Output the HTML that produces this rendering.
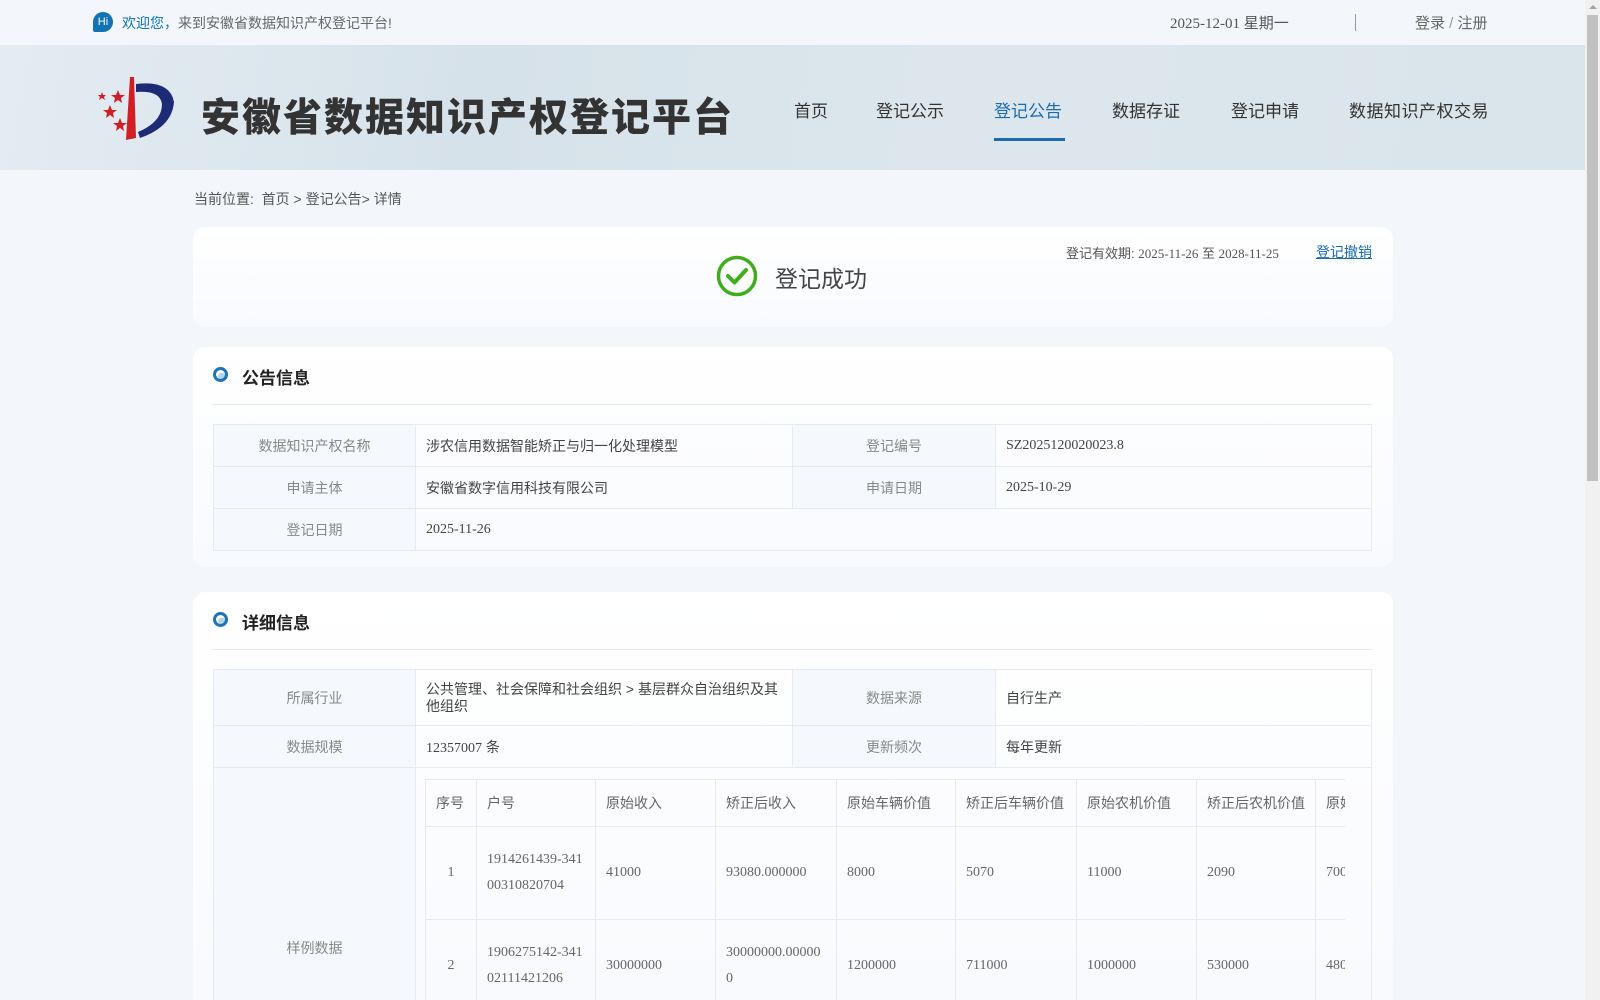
<!DOCTYPE html>
<html style="height:1000px;overflow:hidden"><head><meta charset="utf-8"><style>
*{margin:0;padding:0;box-sizing:border-box}
body{width:1600px;height:1000px;overflow:hidden;background:#f3f6fb;font-family:"Liberation Sans","Noto Sans CJK SC",sans-serif;font-size:14px;color:#333;position:relative}
.a{position:absolute;white-space:nowrap}
.serif{font-family:"Liberation Serif","Noto Sans CJK SC",serif}
.top{left:0;top:0;width:1585px;height:45px;background:#f3f6fb}
.hdr{left:0;top:45px;width:1585px;height:125px;background:linear-gradient(100deg,#e4ecf2 0%,#d6e2ea 30%,#dce6ec 60%,#dae5eb 100%)}
.nav{top:97px;font-size:17px;color:#333}
.card{background:linear-gradient(#fff,#f8fafd);border-radius:12px}
table{border-collapse:collapse;position:absolute}
td{border:1px solid #e6ebf1;font-size:14px}
td.k{background:#f5f9fd;color:#888;text-align:center}
td.v{padding-left:10px;color:#444}
.it td{color:#666;padding-left:10px;line-height:26px}
.ttl{font-size:17px;font-weight:bold;color:#222}
.dot{width:15px;height:15px;border-radius:50%;border:3px solid #1b75b8;background:radial-gradient(circle at 65% 70%,#b9d3ea 40%,#fff 45%)}
.hr{height:1px;background:#e6e9ee}
</style></head><body>
<div class="a top"></div>
<div class="a" style="left:93px;top:12px;width:20px;height:20px;border-radius:50% 50% 50% 2px;background:#1273b5;color:#fff;font-size:11px;line-height:20px;text-align:center">Hi</div>
<div class="a" style="left:122px;top:13px;font-size:14px;color:#666"><span style="color:#1273b5">欢迎您，</span>来到安徽省数据知识产权登记平台!</div>
<div class="a serif" style="left:1170px;top:12px;font-size:15px;color:#555">2025-12-01 星期一</div>
<div class="a" style="left:1355px;top:14px;width:1px;height:17px;background:#999"></div>
<div class="a" style="left:1415px;top:12px;font-size:15px;color:#666">登录 <span style="color:#999">/</span> 注册</div>
<div class="a hdr"></div>
<svg class="a" style="left:90px;top:72px" width="90" height="70" viewBox="0 0 90 70">
<path d="M40 5 L36 68 L46 66 L44 5 Z" fill="#d21f26"/>
<path d="M46 12 Q80 8 84 30 Q82 55 50 66 L48 60 Q72 50 72 32 Q70 18 46 20 Z" fill="#1d2a75"/>
<polygon points="28,18 30,23 35,23 31,26 32,31 28,28 24,31 25,26 21,23 26,23" fill="#d21f26"/>
<polygon points="20,33 22,38 27,38 23,41 24,46 20,43 16,46 17,41 13,38 18,38" fill="#d21f26"/>
<polygon points="12,20 13,23 16,23 14,25 15,28 12,26 9,28 10,25 8,23 11,23" fill="#d21f26"/>
<polygon points="30,46 32,51 37,51 33,54 34,59 30,56 26,59 27,54 23,51 28,51" fill="#d21f26"/>
</svg>
<div class="a" style="left:201px;top:87px;font-size:39px;font-weight:900;color:#333;letter-spacing:2px">安徽省数据知识产权登记平台</div>
<div class="a nav" style="left:794px">首页</div>
<div class="a nav" style="left:876px">登记公示</div>
<div class="a nav" style="left:994px;color:#1a6bb0">登记公告</div>
<div class="a" style="left:994px;top:138px;width:71px;height:3px;background:#1a6bb0"></div>
<div class="a nav" style="left:1112px">数据存证</div>
<div class="a nav" style="left:1231px">登记申请</div>
<div class="a nav" style="left:1349px;letter-spacing:0.5px">数据知识产权交易</div>
<div class="a" style="left:194px;top:189px;color:#555">当前位置: &nbsp;首页 &gt; 登记公告&gt; 详情</div>

<div class="a card" style="left:193px;top:227px;width:1200px;height:100px"></div>
<svg class="a" style="left:716px;top:255px" width="42" height="42" viewBox="0 0 42 42"><circle cx="21" cy="21" r="18.5" fill="none" stroke="#3fae1a" stroke-width="3.5"/><path d="M12 21 L18.5 27.5 L30 15" fill="none" stroke="#3fae1a" stroke-width="4" stroke-linecap="round" stroke-linejoin="round"/></svg>
<div class="a" style="left:775px;top:260px;font-size:23px;color:#444">登记成功</div>
<div class="a" style="left:1066px;top:243px;font-size:13px;color:#555">登记有效期: <span class="serif">2025-11-26</span> 至 <span class="serif">2028-11-25</span></div>
<div class="a" style="left:1316px;top:242px;font-size:14px;color:#1a6bb0;text-decoration:underline">登记撤销</div>

<div class="a card" style="left:193px;top:347px;width:1200px;height:220px"></div>
<div class="a dot" style="left:213px;top:367px"></div>
<div class="a ttl" style="left:242px;top:364px">公告信息</div>
<div class="a hr" style="left:212px;top:404px;width:1160px"></div>
<table style="left:213px;top:424px;width:1159px">
<tr style="height:42px"><td class="k" style="width:202px">数据知识产权名称</td><td class="v" style="width:377px">涉农信用数据智能矫正与归一化处理模型</td><td class="k" style="width:203px">登记编号</td><td class="v serif">SZ2025120020023.8</td></tr>
<tr style="height:42px"><td class="k">申请主体</td><td class="v">安徽省数字信用科技有限公司</td><td class="k">申请日期</td><td class="v serif">2025-10-29</td></tr>
<tr style="height:42px"><td class="k">登记日期</td><td class="v serif" colspan="3">2025-11-26</td></tr>
</table>

<div class="a card" style="left:193px;top:592px;width:1200px;height:408px;border-radius:12px 12px 0 0"></div>
<div class="a dot" style="left:213px;top:612px"></div>
<div class="a ttl" style="left:242px;top:609px">详细信息</div>
<div class="a hr" style="left:212px;top:649px;width:1160px"></div>
<table style="left:213px;top:669px;width:1159px">
<tr style="height:56px"><td class="k" style="width:202px">所属行业</td><td class="v" style="width:377px;line-height:17px;white-space:normal;padding-right:10px">公共管理、社会保障和社会组织 &gt; 基层群众自治组织及其他组织</td><td class="k" style="width:203px">数据来源</td><td class="v">自行生产</td></tr>
<tr style="height:42px"><td class="k">数据规模</td><td class="v"><span class="serif">12357007</span> 条</td><td class="k">更新频次</td><td class="v">每年更新</td></tr>
<tr style="height:360px"><td class="k">样例数据</td><td colspan="3"></td></tr>
</table>
<div class="a" style="left:425px;top:779px;width:920px;height:221px;overflow:hidden">
<table class="it serif" style="left:0;top:0;width:1100px;table-layout:fixed">
<tr style="height:47px"><td style="width:51px;font-family:'Liberation Sans','Noto Sans CJK SC',sans-serif">序号</td><td style="width:119px;font-family:'Liberation Sans','Noto Sans CJK SC',sans-serif">户号</td><td style="width:120px;font-family:'Liberation Sans','Noto Sans CJK SC',sans-serif">原始收入</td><td style="width:121px;font-family:'Liberation Sans','Noto Sans CJK SC',sans-serif">矫正后收入</td><td style="width:119px;font-family:'Liberation Sans','Noto Sans CJK SC',sans-serif">原始车辆价值</td><td style="width:121px;font-family:'Liberation Sans','Noto Sans CJK SC',sans-serif">矫正后车辆价值</td><td style="width:120px;font-family:'Liberation Sans','Noto Sans CJK SC',sans-serif">原始农机价值</td><td style="width:119px;font-family:'Liberation Sans','Noto Sans CJK SC',sans-serif">矫正后农机价值</td><td style="font-family:'Liberation Sans','Noto Sans CJK SC',sans-serif">原始</td></tr>
<tr style="height:93px"><td style="text-align:center;padding:0">1</td><td>1914261439-341<br>00310820704</td><td>41000</td><td>93080.000000</td><td>8000</td><td>5070</td><td>11000</td><td>2090</td><td>7000</td></tr>
<tr style="height:93px"><td style="text-align:center;padding:0">2</td><td>1906275142-341<br>02111421206</td><td>30000000</td><td>30000000.00000<br>0</td><td>1200000</td><td>711000</td><td>1000000</td><td>530000</td><td>4800</td></tr>
</table></div>
<div class="a" style="left:1585px;top:0;width:15px;height:1000px;background:#f1f1f1"></div>
<div class="a" style="left:1587px;top:15px;width:11px;height:466px;background:#c1c1c1"></div>
<div class="a" style="left:1589px;top:5px;width:0;height:0;border-left:4px solid transparent;border-right:4px solid transparent;border-bottom:4px solid #a3a3a3"></div>
</body></html>
